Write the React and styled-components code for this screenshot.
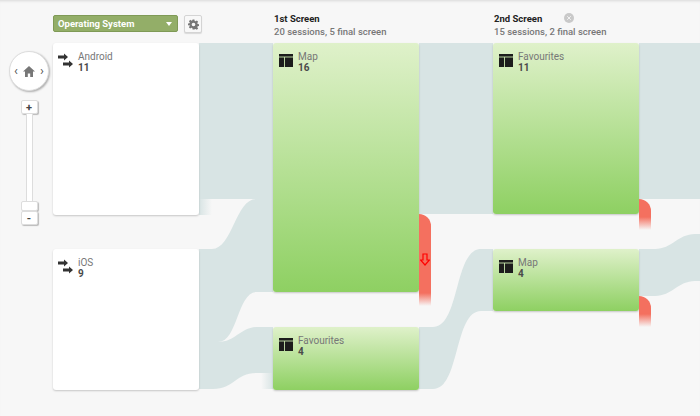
import React from "react";
import styled, { createGlobalStyle } from "styled-components";

const FLOW = "#d8e4e4";
const COLUMN_W = 146;

const GlobalStyle = createGlobalStyle`
  html, body {
    margin: 0;
    background: #f7f7f7;
    font-family: Roboto, "Liberation Sans", sans-serif;
  }
`;

const Stage = styled.div`
  position: relative;
  width: 700px;
  height: 416px;
  overflow: hidden;
  background: #f7f7f7;
  box-shadow: inset 0 3px 3px -2px rgba(0, 0, 0, 0.12);
`;

const FlowLayer = styled.svg`
  position: absolute;
  left: 0;
  top: 0;
`;

const Header = styled.div`
  position: relative;
  display: flex;
  gap: 74px;
  height: 43px;
  padding-left: 53px;
  box-sizing: border-box;
`;

const HeaderCell = styled.div`
  width: ${COLUMN_W}px;
  padding: ${(p) => (p.$tools ? "15px 0 0" : "12px 0 0 1px")};
  box-sizing: border-box;
  display: ${(p) => (p.$tools ? "flex" : "block")};
  gap: 6px;
  align-items: flex-start;
`;

const Select = styled.div`
  width: 125px;
  height: 17px;
  flex: none;
  box-sizing: border-box;
  padding: 0 5px 0 4px;
  display: flex;
  align-items: center;
  justify-content: space-between;
  background: #93ae68;
  border: 1px solid #7f9a56;
  border-radius: 2px;
  color: #fff;
  font-size: 9.5px;
  font-weight: 700;
`;

const Caret = styled.span`
  width: 0;
  height: 0;
  border-left: 3px solid transparent;
  border-right: 3px solid transparent;
  border-top: 4px solid #fff;
`;

const GearButton = styled.div`
  width: 18px;
  height: 18px;
  flex: none;
  display: flex;
  align-items: center;
  justify-content: center;
  background: #f8f8f8;
  border: 1px solid #d4d4d4;
  border-radius: 2px;
  box-sizing: border-box;
  box-shadow: 0 1px 1px rgba(0, 0, 0, 0.12);
`;

const TitleRow = styled.div`
  display: flex;
  align-items: center;
  height: 12px;
  gap: 22px;
  color: #222;
  font-size: 9.5px;
  font-weight: 700;
`;

const Subtitle = styled.div`
  margin-top: 1px;
  color: #777;
  font-size: 9.5px;
  font-weight: 500;
  line-height: 13px;
  white-space: nowrap;
`;

const Columns = styled.div`
  position: relative;
  display: flex;
  gap: 74px;
  padding-left: 53px;
`;

const Column = styled.div`
  width: ${COLUMN_W}px;
  display: flex;
  flex-direction: column;
  gap: ${(p) => p.$gap}px;
`;

const Node = styled.div`
  position: relative;
  height: ${(p) => p.$h}px;
  box-sizing: border-box;
  padding: 8px 5px 8px ${(p) => (p.$source ? 5 : 6)}px;
  display: flex;
  align-items: flex-start;
  gap: ${(p) => (p.$source ? 5 : 5)}px;
  border-radius: 3px;
  background: ${(p) =>
    p.$source ? "#fff" : "linear-gradient(#dff1ca, #8ed062)"};
  box-shadow: 0 1px 2px rgba(0, 0, 0, 0.2);
`;

const NodeIcon = styled.svg`
  flex: none;
  margin-top: ${(p) => p.$top}px;
`;

const Label = styled.div`
  color: #777;
  font-size: 10px;
  line-height: 11px;
`;

const Count = styled.div`
  color: #4a4a4a;
  font-size: 10px;
  font-weight: 700;
  line-height: 11px;
`;

const Drop = styled.div`
  position: absolute;
  left: 100%;
  top: ${(p) => p.$top}px;
  width: 12px;
  height: ${(p) => p.$h}px;
  display: flex;
  justify-content: center;
  border-top-right-radius: 12px;
  background: linear-gradient(#f4705f calc(100% - 13px), rgba(244, 112, 95, 0));
`;

const DropArrow = styled.svg`
  margin-top: 39px;
`;

const ZoomControl = styled.div`
  position: absolute;
  left: 9px;
  top: 51px;
  width: 40px;
  display: flex;
  flex-direction: column;
  align-items: center;
`;

const NavDial = styled.div`
  width: 40px;
  height: 40px;
  box-sizing: border-box;
  display: flex;
  align-items: center;
  justify-content: center;
  gap: 5px;
  background: #fff;
  border: 1px solid #ddd;
  border-radius: 50%;
  box-shadow: 1px 1px 2px rgba(0, 0, 0, 0.3);
  color: #555;
  font-size: 13px;
  line-height: 14px;
`;

const ZoomButton = styled.div`
  width: 17px;
  height: ${(p) => p.$h}px;
  margin-top: ${(p) => p.$top || 0}px;
  box-sizing: border-box;
  display: flex;
  align-items: center;
  justify-content: center;
  background: #fff;
  border: 1px solid #ddd;
  border-radius: 2px;
  box-shadow: 1px 1px 1px rgba(0, 0, 0, 0.25);
  color: #444;
  font-size: 11px;
  font-weight: 700;
`;

const ZoomTrack = styled.div`
  width: 7px;
  height: 87px;
  box-sizing: border-box;
  background: #fff;
  border-left: 1px solid #ddd;
  border-right: 1px solid #ddd;
`;

function SegmentIcon() {
  return (
    <NodeIcon $top={2} width="15" height="15" viewBox="0 0 15 15">
      <path d="M0 2.500 H6 V0.500 L10 4 L6 7.500 V5.500 H0 Z" fill="#333" />
      <path d="M5 9.500 H11 V7.500 L15 11 L11 14.500 V12.500 H5 Z" fill="#333" />
    </NodeIcon>
  );
}

function ScreenIcon() {
  return (
    <NodeIcon $top={3} width="14" height="13" viewBox="0 0 14 13">
      <path d="M0 0 H14 V13 H0 Z" fill="#1c1c1c" />
      <path d="M0 3 H14 M5.500 3 V13" stroke="#c8e6ae" strokeWidth="0.9" fill="none" />
    </NodeIcon>
  );
}

function FlowPaths() {
  return (
    <FlowLayer width="700" height="416" viewBox="0 0 700 416">
      <defs>
        <linearGradient id="fadeOut">
          <stop offset="0" stopColor={FLOW} />
          <stop offset="1" stopColor={FLOW} stopOpacity="0" />
        </linearGradient>
        <linearGradient id="fadeIn">
          <stop offset="0" stopColor={FLOW} stopOpacity="0" />
          <stop offset="1" stopColor={FLOW} />
        </linearGradient>
      </defs>
      <g fill={FLOW}>
        <path d="M199 43 H273 V199 H199 Z" />
        <path d="M199 249 H212 C232 249 236 199 256 199 H273 V292 H257 C237 292 238 342 218 342 H199 Z" />
        <path d="M199 342 H218 C236 342 240 327 258 327 H273 V373 H256 C236 373 234 389 213 389 H199 Z" />
        <path d="M419 43 H493 V214 H419 Z" />
        <path d="M419 327 H433 C460 327 454 249 481 249 H493 V311 H481 C454 311 460 389 433 389 H419 Z" />
        <path d="M639 43 H700 V199 H639 Z" />
        <path d="M639 249 H655 C672 249 678 234 695 234 H700 V281 H695 C678 281 672 296 655 296 H639 Z" />
      </g>
      <rect x="199" y="199" width="13" height="16" fill="url(#fadeOut)" />
      <rect x="261" y="373" width="12" height="16" fill="url(#fadeIn)" />
    </FlowLayer>
  );
}

export default function App() {
  return (
    <Stage>
      <GlobalStyle />
      <FlowPaths />
      <Header>
        <HeaderCell $tools>
          <Select>
            Operating System
            <Caret />
          </Select>
          <GearButton>
            <svg width="11" height="11" viewBox="0 0 24 24" fill="#777">
              <path fillRule="evenodd" d="M10 1h4l.6 3.200 2 .8 2.700-1.800 2.800 2.800-1.800 2.700.8 2 3.200.6v4l-3.200.6-.8 2 1.800 2.700-2.800 2.800-2.700-1.800-2 .8L14 23h-4l-.6-3.200-2-.8-2.700 1.800-2.800-2.800 1.800-2.700-.8-2L0 14v-4l3.200-.6.8-2L2.100 4.700l2.800-2.800 2.700 1.800 2-.8zM12 8a4 4 0 100 8 4 4 0 000-8z" />
            </svg>
          </GearButton>
        </HeaderCell>
        <HeaderCell>
          <TitleRow>1st Screen</TitleRow>
          <Subtitle>20 sessions, 5 final screen</Subtitle>
        </HeaderCell>
        <HeaderCell>
          <TitleRow>
            2nd Screen
            <svg width="10" height="10" viewBox="0 0 11 11">
              <circle cx="5.500" cy="5.500" r="5.500" fill="#c9c9c9" />
              <path d="M3.500 3.500 L7.500 7.500 M7.500 3.500 L3.500 7.500" stroke="#f2f2f2" strokeWidth="1.100" />
            </svg>
          </TitleRow>
          <Subtitle>15 sessions, 2 final screen</Subtitle>
        </HeaderCell>
      </Header>
      <Columns>
        <Column $gap={34}>
          <Node $h={172} $source>
            <SegmentIcon />
            <div>
              <Label>Android</Label>
              <Count>11</Count>
            </div>
          </Node>
          <Node $h={141} $source>
            <SegmentIcon />
            <div>
              <Label>iOS</Label>
              <Count>9</Count>
            </div>
          </Node>
        </Column>
        <Column $gap={35}>
          <Node $h={249}>
            <ScreenIcon />
            <div>
              <Label>Map</Label>
              <Count>16</Count>
            </div>
            <Drop $top={171} $h={92}>
              <DropArrow width="10" height="13" viewBox="0 0 10 13">
                <path d="M3 1 H7 V7 H9.500 L5 12 L0.500 7 H3 Z" fill="none" stroke="#f00" strokeWidth="1.200" />
              </DropArrow>
            </Drop>
          </Node>
          <Node $h={63}>
            <ScreenIcon />
            <div>
              <Label>Favourites</Label>
              <Count>4</Count>
            </div>
          </Node>
        </Column>
        <Column $gap={35}>
          <Node $h={171}>
            <ScreenIcon />
            <div>
              <Label>Favourites</Label>
              <Count>11</Count>
            </div>
            <Drop $top={156} $h={31} />
          </Node>
          <Node $h={62}>
            <ScreenIcon />
            <div>
              <Label>Map</Label>
              <Count>4</Count>
            </div>
            <Drop $top={47} $h={31} />
          </Node>
        </Column>
      </Columns>
      <ZoomControl>
        <NavDial>
          <span>‹</span>
          <svg width="12" height="11" viewBox="0 0 12 11" fill="#777">
            <path d="M6 0 L12 5.500 H10 V11 H7.200 V7.500 H4.800 V11 H2 V5.500 H0 Z" />
          </svg>
          <span>›</span>
        </NavDial>
        <ZoomButton $h={14} $top={9}>+</ZoomButton>
        <ZoomTrack />
        <ZoomButton $h={10} />
        <ZoomButton $h={14}>-</ZoomButton>
      </ZoomControl>
    </Stage>
  );
}
